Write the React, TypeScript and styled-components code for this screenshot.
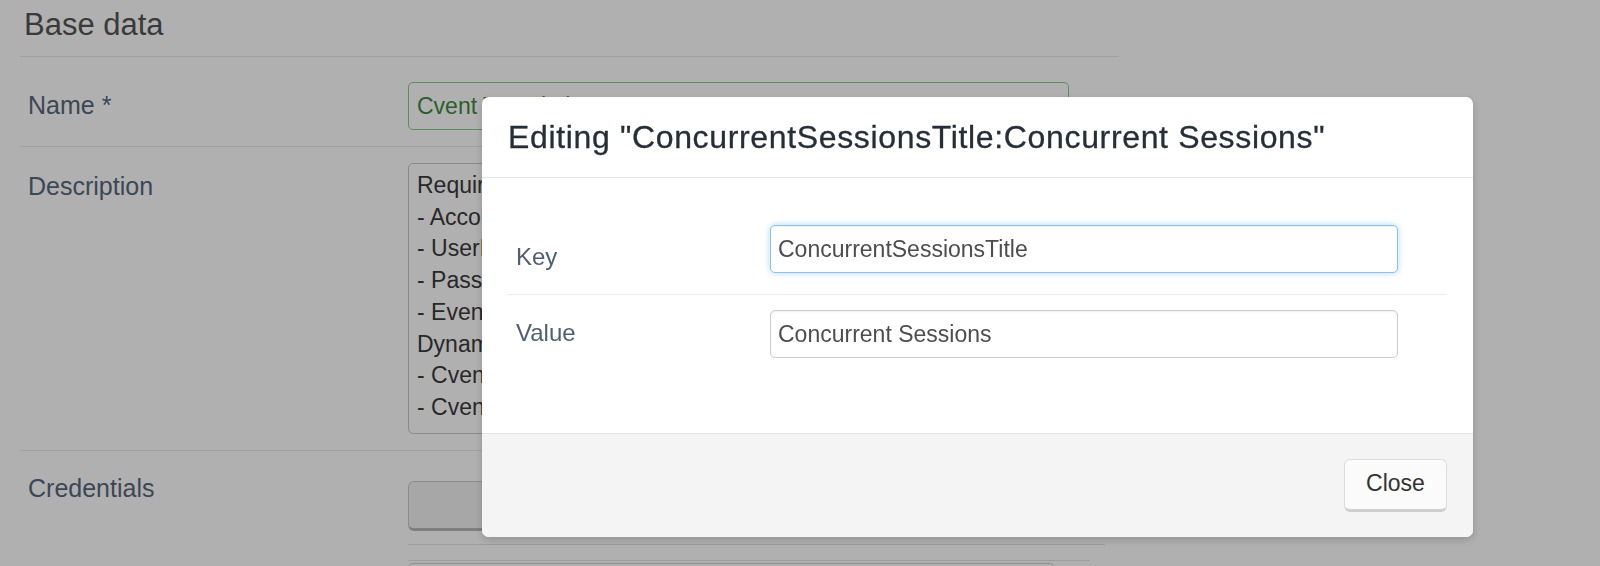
import styled, { createGlobalStyle } from "styled-components";

const GlobalStyle = createGlobalStyle`
    html, body {
        margin: 0;
        padding: 0;
        background: #ffffff;
        overflow: hidden;
        font-family: "Liberation Sans", Arial, Helvetica, sans-serif;
    }
`;

const Page = styled.div`
    width: 1099px;
    height: 566px;
    overflow: hidden;
    padding-left: 20px;
`;

const Heading = styled.h1`
    margin: 0;
    padding: 8px 0 14px 4px;
    font-size: 31px;
    line-height: 34px;
    font-weight: normal;
    color: #555555;
    border-bottom: 1px solid #e8e8e8;
`;

const FormRow = styled.div<{ $top: number; $bottom: number }>`
    display: grid;
    grid-template-columns: 388px 1fr;
    padding: ${p => p.$top}px 0 ${p => p.$bottom}px;
    border-bottom: 1px solid #e8e8e8;
`;

const PageLabel = styled.div<{ $offset: number }>`
    justify-self: start;
    padding: ${p => p.$offset}px 0 0 8px;
    font-size: 25px;
    line-height: 25px;
    color: #58687c;
`;

const SuccessInput = styled.div`
    box-sizing: border-box;
    width: 661px;
    height: 48px;
    padding: 0 8px;
    border: 1px solid #86cf87;
    border-radius: 5px;
    font-size: 23px;
    line-height: 46px;
    color: #3f8a40;
`;

const TextArea = styled.div`
    box-sizing: border-box;
    width: 661px;
    height: 271px;
    padding: 6px 8px;
    border: 1px solid #c8c8c8;
    border-radius: 5px;
    font-size: 23px;
    line-height: 31.7px;
    color: #3a3a3a;
    white-space: pre;
    overflow: hidden;
`;

const Controls = styled.div`
    display: flex;
    flex-direction: column;
`;

const CredButton = styled.div`
    box-sizing: border-box;
    margin-top: 14px;
    width: 661px;
    height: 50px;
    background: #f2f2f2;
    border: 1px solid #cbcbcb;
    border-bottom: 3px solid #b8b8b8;
    border-radius: 6px;
`;

const Divider = styled.div<{ $width: number; $gap: number }>`
    width: ${p => p.$width}px;
    height: 1px;
    margin-top: ${p => p.$gap}px;
    background: #e4e4e4;
`;

const CredBox = styled.div`
    box-sizing: border-box;
    margin-top: 2px;
    width: 647px;
    height: 40px;
    border: 1px solid #cfcfcf;
    border-radius: 5px;
`;

const Backdrop = styled.div`
    position: fixed;
    inset: 0;
    background: rgba(0, 0, 0, 0.31);
    z-index: 10;
`;

const Dialog = styled.div`
    position: fixed;
    left: 482px;
    top: 97px;
    width: 991px;
    z-index: 20;
    background: #ffffff;
    border-radius: 7px;
    overflow: hidden;
    box-shadow: 0 3px 9px rgba(0, 0, 0, 0.18);
`;

const Header = styled.div`
    padding: 23px 26px 23px;
    border-bottom: 1px solid #e6e6e6;
`;

const Title = styled.h4`
    margin: 0;
    font-size: 32px;
    line-height: 34px;
    font-weight: normal;
    letter-spacing: 0.65px;
    color: #262e38;
    white-space: nowrap;
    -webkit-text-stroke: 0.3px #262e38;
`;

const Body = styled.div`
    padding: 26px 26px 0;
    height: 255px;
    box-sizing: border-box;
`;

const FieldRow = styled.div<{ $top: number; $bottom: number; $line?: boolean }>`
    display: grid;
    grid-template-columns: 262px 628px;
    align-items: start;
    padding: ${p => p.$top}px 0 ${p => p.$bottom}px;
    border-bottom: ${p => (p.$line ? "1px solid #ececec" : "none")};
`;

const FieldLabel = styled.label<{ $offset: number }>`
    justify-self: start;
    margin: ${p => p.$offset}px 0 0 8px;
    font-size: 24px;
    line-height: 24px;
    color: #506073;
`;

const TextInput = styled.input<{ $focused?: boolean }>`
    box-sizing: border-box;
    width: 628px;
    height: 48px;
    padding: 0 7px;
    margin: 0;
    font-family: "Liberation Sans", Arial, Helvetica, sans-serif;
    font-size: 23px;
    color: #4d4d4d;
    background: #ffffff;
    border-radius: 5px;
    outline: none;
    border: 1px solid ${p => (p.$focused ? "#8cc1ec" : "#cccccc")};
    box-shadow: ${p =>
        p.$focused
            ? "inset 0 1px 1px rgba(0,0,0,.05), 0 0 6px rgba(102,175,233,.5)"
            : "inset 0 1px 2px rgba(0,0,0,.08)"};
`;

const Footer = styled.div`
    display: flex;
    justify-content: flex-end;
    padding: 25px 26px;
    background: #f4f4f4;
    border-top: 1px solid #e2e2e2;
`;

const CloseButton = styled.button`
    box-sizing: border-box;
    height: 53px;
    width: 103px;
    padding: 0 0 3px;
    font-family: "Liberation Sans", Arial, Helvetica, sans-serif;
    font-size: 23px;
    color: #333333;
    background: #fbfbfb;
    border: 1px solid #dcdcdc;
    border-bottom: 3px solid #cfcfcf;
    border-radius: 6px;
    cursor: pointer;
`;

const description = [
    "Required parameters:",
    "- AccountNumber",
    "- UserId",
    "- Password",
    "- EventCode",
    "Dynamic parameters:",
    "- CventEventTitle",
    "- CventEventCode",
].join("\n");

const App = () => {
    return (
        <>
            <GlobalStyle />
            <Page>
                <Heading>Base data</Heading>
                <FormRow $top={25} $bottom={16}>
                    <PageLabel $offset={11}>Name *</PageLabel>
                    <SuccessInput>Cvent Translations</SuccessInput>
                </FormRow>
                <FormRow $top={16} $bottom={16}>
                    <PageLabel $offset={11}>Description</PageLabel>
                    <TextArea>{description}</TextArea>
                </FormRow>
                <FormRow $top={16} $bottom={0}>
                    <PageLabel $offset={9}>Credentials</PageLabel>
                    <Controls>
                        <CredButton />
                        <Divider $width={697} $gap={13} />
                        <Divider $width={682} $gap={15} />
                        <CredBox />
                    </Controls>
                </FormRow>
            </Page>

            <Backdrop />
            <Dialog>
                <Header>
                    <Title>Editing "ConcurrentSessionsTitle:Concurrent Sessions"</Title>
                </Header>
                <Body>
                    <FieldRow $top={21} $bottom={21} $line>
                        <FieldLabel $offset={20}>Key</FieldLabel>
                        <TextInput $focused readOnly value="ConcurrentSessionsTitle" />
                    </FieldRow>
                    <FieldRow $top={15} $bottom={0}>
                        <FieldLabel $offset={11}>Value</FieldLabel>
                        <TextInput readOnly value="Concurrent Sessions" />
                    </FieldRow>
                </Body>
                <Footer>
                    <CloseButton>Close</CloseButton>
                </Footer>
            </Dialog>
        </>
    );
};

export default App;
